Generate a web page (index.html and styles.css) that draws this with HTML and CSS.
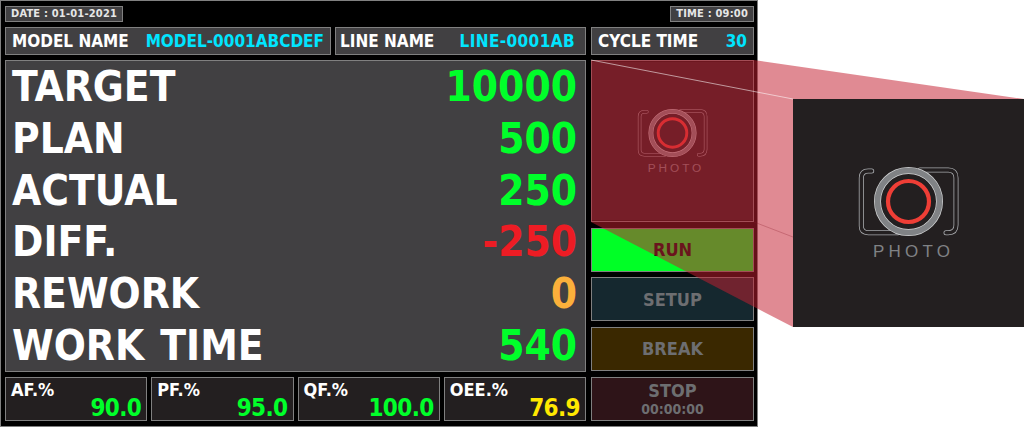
FILE: index.html
```html
<!DOCTYPE html>
<html lang="en">
<head>
    <meta charset="UTF-8">
    <meta name="viewport" content="width=device-width, initial-scale=1.0">
    <title>Line Status Board</title>
    <link rel="stylesheet" href="styles.css">
</head>
<body>
    <div class="screen">
        <div class="clock-row">
            <span class="clock">DATE : 01-01-2021</span>
            <span class="clock">TIME : 09:00</span>
        </div>

        <div class="info-row">
            <div class="info info-model"><span>MODEL NAME</span><span class="cyan">MODEL-0001ABCDEF</span></div>
            <div class="info info-line"><span>LINE NAME</span><span class="cyan">LINE-0001AB</span></div>
            <div class="info info-cycle"><span>CYCLE TIME</span><span class="cyan">30</span></div>
        </div>

        <div class="body-row">
            <div class="main-panel">
                <div class="stat"><span>TARGET</span><span class="green">10000</span></div>
                <div class="stat"><span>PLAN</span><span class="green">500</span></div>
                <div class="stat"><span>ACTUAL</span><span class="green">250</span></div>
                <div class="stat"><span>DIFF.</span><span class="red">-250</span></div>
                <div class="stat"><span>REWORK</span><span class="orange">0</span></div>
                <div class="stat"><span>WORK TIME</span><span class="green">540</span></div>
            </div>
            <div class="side">
                <svg class="photo-small" viewBox="0 0 231 228">
                    <rect width="231" height="228" fill="#231f20"/>
                    <g fill="none" stroke-linecap="round">
                        <path d="M78.7 72H75.3Q68.3 72 68.3 79V127Q68.3 133.7 75.3 133.7H105" stroke="#a7a9ac" stroke-width="5"/>
                        <path d="M78.7 72H75.3Q68.3 72 68.3 79V127Q68.3 133.7 75.3 133.7H105" stroke="#231f20" stroke-width="3.4"/>
                        <path d="M127 71H155.3Q163 71 163 79V126Q163 133.7 155.3 133.7H153" stroke="#a7a9ac" stroke-width="5"/>
                        <path d="M127 71H155.3Q163 71 163 79V126Q163 133.7 155.3 133.7H153" stroke="#231f20" stroke-width="3.4"/>
                        <circle cx="115.5" cy="102.5" r="31" stroke="#d1d3d4" stroke-width="7"/>
                        <circle cx="115.5" cy="102.5" r="31" stroke="#808285" stroke-width="5.6"/>
                        <circle cx="115.5" cy="102.5" r="20.5" stroke="#ef3e36" stroke-width="4.2"/>
                    </g>
                    <text x="80" y="158" class="photo-text">PHOTO</text>
                </svg>
                <div class="status run">RUN</div>
                <div class="status setup">SETUP</div>
                <div class="status break">BREAK</div>
            </div>
        </div>

        <div class="bottom-row">
            <div class="rates">
                <div class="rate"><span class="rate-name">AF.%</span><span class="rate-value green">90.0</span></div>
                <div class="rate"><span class="rate-name">PF.%</span><span class="rate-value green">95.0</span></div>
                <div class="rate"><span class="rate-name">QF.%</span><span class="rate-value green">100.0</span></div>
                <div class="rate"><span class="rate-name">OEE.%</span><span class="rate-value yellow">76.9</span></div>
            </div>
            <div class="status stop">STOP<small>00:00:00</small></div>
        </div>
    </div>

    <svg class="zoom-cone" width="1024" height="427">
        <polygon points="591,60 754,60 1024,99 1024,327 793,327 591,222" fill="#c41e30" fill-opacity="0.52"/>
        <line x1="591" y1="60" x2="793" y2="99" stroke="#fff" stroke-opacity="0.55"/>
        <line x1="754" y1="222" x2="793" y2="237" stroke="#8c1f2c" stroke-opacity="0.3"/>
    </svg>
    <svg class="photo-big" viewBox="0 0 231 228">
        <rect width="231" height="228" fill="#231f20"/>
        <g fill="none" stroke-linecap="round">
            <path d="M78.7 72H75.3Q68.3 72 68.3 79V127Q68.3 133.7 75.3 133.7H105" stroke="#a7a9ac" stroke-width="5"/>
            <path d="M78.7 72H75.3Q68.3 72 68.3 79V127Q68.3 133.7 75.3 133.7H105" stroke="#231f20" stroke-width="3.4"/>
            <path d="M127 71H155.3Q163 71 163 79V126Q163 133.7 155.3 133.7H153" stroke="#a7a9ac" stroke-width="5"/>
            <path d="M127 71H155.3Q163 71 163 79V126Q163 133.7 155.3 133.7H153" stroke="#231f20" stroke-width="3.4"/>
            <circle cx="115.5" cy="102.5" r="31" stroke="#d1d3d4" stroke-width="7"/>
            <circle cx="115.5" cy="102.5" r="31" stroke="#808285" stroke-width="5.6"/>
            <circle cx="115.5" cy="102.5" r="20.5" stroke="#ef3e36" stroke-width="4.2"/>
        </g>
        <text x="80" y="158" class="photo-text">PHOTO</text>
    </svg>
</body>
</html>
```

FILE: styles.css
```css
body {
    margin: 0;
    background: #fff;
    font-family: "DejaVu Sans Condensed", "DejaVu Sans", sans-serif;
    font-stretch: condensed;
    font-weight: bold;
    color: #fff;
    height: 427px;
    width: 1024px;
    overflow: hidden;
    position: relative;
}
.photo-text {
    font-family: "Liberation Sans", sans-serif;
    font-weight: normal;
    font-size: 17px;
    letter-spacing: 4.2px;
    fill: #808285;
}
.screen {
    box-sizing: border-box;
    width: 758px;
    height: 427px;
    background: #000;
    border: 1px solid #808080;
    padding: 5px 3px 4px 4px;
    display: flex;
    flex-direction: column;
}
.clock-row {
    display: flex;
    justify-content: space-between;
    height: 16px;
}
.clock {
    background: #414042;
    border: 1px solid #808080;
    font-size: 11px;
    line-height: 14px;
    padding: 0 5px;
    color: #e6e6e6;
    letter-spacing: 0.2px;
}
.info-row {
    display: flex;
    gap: 4px;
    margin-top: 5px;
    height: 28px;
}
.info {
    box-sizing: border-box;
    background: #414042;
    border: 1px solid #808080;
    display: flex;
    justify-content: space-between;
    align-items: center;
    font-size: 17px;
    padding: 0 6px;
}
.info-model { width: 326px; }
.info-line {
    width: 251px;
    padding: 0 10px 0 4px;
}
.info-line .cyan { letter-spacing: 0.4px; }
.info-cycle { width: 163px; margin-left: 1px; }
.cyan { color: #00e5ff; }
.green { color: #00ff2a; }
.red { color: #ed1c24; }
.orange { color: #fbb03b; }
.yellow { color: #ffe800; }
.body-row {
    display: flex;
    gap: 5px;
    margin-top: 5px;
    height: 312px;
}
.main-panel {
    box-sizing: border-box;
    width: 581px;
    background: #414042;
    border: 1px solid #808080;
    padding: 0 8px 0 6px;
    display: flex;
    flex-direction: column;
}
.stat {
    display: flex;
    justify-content: space-between;
    align-items: center;
    height: 51.7px;
    font-size: 42px;
    word-spacing: 3px;
}
.side {
    width: 163px;
    display: flex;
    flex-direction: column;
}
.photo-small {
    display: block;
    width: 163px;
    height: 162px;
    box-sizing: border-box;
    border: 1px solid #808080;
    margin-bottom: 6px;
}
.status {
    box-sizing: border-box;
    height: 44px;
    border: 1px solid #808080;
    display: flex;
    flex-direction: column;
    align-items: center;
    justify-content: center;
    font-size: 18px;
    line-height: 20px;
    color: #6d6e71;
}
.setup {
    background: #15282f;
    margin-top: 5px;
    padding-top: 2px;
}
.break {
    background: #3a2800;
    margin-top: 6px;
}
.run {
    background: #00ff26;
    color: #0a0a0a;
}
.stop {
    width: 163px;
    background: #2e1418;
}
.stop small {
    font-size: 14px;
    line-height: 16px;
}
.bottom-row {
    display: flex;
    gap: 5px;
    margin-top: 5px;
    height: 44px;
}
.rates {
    width: 581px;
    display: grid;
    grid-template-columns: repeat(4, 1fr);
    gap: 4px;
}
.rate {
    box-sizing: border-box;
    background: #231f20;
    border: 1px solid #808080;
    padding: 0 5px;
    display: flex;
    flex-direction: column;
}
.rate-name {
    font-size: 18px;
    line-height: 20px;
    margin-top: 2px;
}
.rate-value {
    font-size: 24px;
    line-height: 24px;
    letter-spacing: -0.6px;
    text-align: right;
    margin-top: -4px;
}
.zoom-cone {
    position: absolute;
    left: 0;
    top: 0;
}
.photo-big {
    position: absolute;
    left: 793px;
    top: 99px;
    width: 231px;
    height: 228px;
}
```
